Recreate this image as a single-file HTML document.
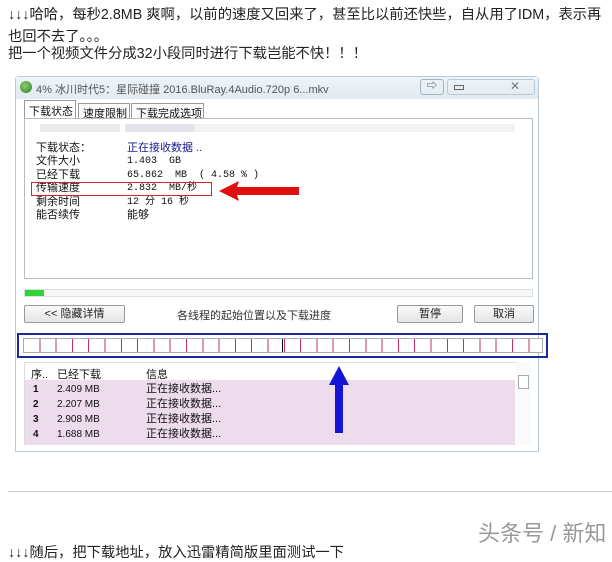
<!DOCTYPE html>
<html><head><meta charset="utf-8"><style>
*{margin:0;padding:0;box-sizing:border-box}
body{width:612px;height:552px;overflow:hidden;background:#fff;font-family:"Liberation Sans","Noto Sans CJK SC",sans-serif;color:#222;position:relative}
.a{position:absolute;white-space:nowrap}
.t{font-size:14.3px;left:8px;line-height:18px}
.s{font-family:"Liberation Sans","Noto Sans CJK SC",sans-serif;font-size:11px;color:#111}
.btn{position:absolute;border:1px solid #9a9a9a;background:linear-gradient(#fafafa,#e4e4e4);font-size:11px;text-align:center;line-height:16px;border-radius:2px}
</style></head><body>
<div class="a t" style="top:6px">↓↓↓哈哈，每秒2.8MB 爽啊，以前的速度又回来了，甚至比以前还快些，自从用了IDM，表示再</div>
<div class="a t" style="top:28px">也回不去了。。。</div>
<div class="a t" style="top:45px">把一个视频文件分成32小段同时进行下载岂能不快！！！</div>

<div class="a" style="left:15px;top:76px;width:524px;height:376px;border:1px solid #b9c9d3;background:#fff;border-radius:4px 4px 0 0"></div>
<div class="a" style="left:16px;top:77px;width:522px;height:22px;background:linear-gradient(#eef4f8,#e2eaf0)"></div>
<div class="a" style="left:20px;top:81px;width:12px;height:12px;border-radius:50%;background:radial-gradient(circle at 40% 40%,#8fd16a,#2a7a2a)"></div>
<div class="a" style="left:36px;top:81px;font-size:11px;color:#555">4% 冰川时代5：星际碰撞 2016.BluRay.4Audio.720p 6...mkv</div>
<div class="a" style="left:420px;top:79px;width:24px;height:16px;border:1px solid #9fb6c2;border-radius:3px;font-size:10px;text-align:center;line-height:14px;color:#333">⇨</div>
<div class="a" style="left:447px;top:79px;width:88px;height:16px;border:1px solid #b9c9d3;border-radius:3px"></div>
<div class="a" style="left:454px;top:85px;width:10px;height:5px;border:1px solid #666"></div>
<div class="a" style="left:510px;top:79px;font-size:12px;color:#777">✕</div>

<div class="a s" style="left:24px;top:100px;width:52px;height:19px;border:1px solid #999;border-bottom:none;background:#fff;padding:2px 4px">下载状态</div>
<div class="a s" style="left:78px;top:103px;width:52px;height:16px;border:1px solid #999;padding:1px 4px;background:#fafafa">速度限制</div>
<div class="a s" style="left:131px;top:103px;width:73px;height:16px;border:1px solid #999;padding:1px 4px;background:#fafafa">下载完成选项</div>
<div class="a" style="left:24px;top:118px;width:509px;height:161px;border:1px solid #bbb"></div>
<div class="a" style="left:40px;top:124px;width:80px;height:8px;background:#ebebeb"></div>
<div class="a" style="left:125px;top:124px;width:70px;height:8px;background:#e4e4ee"></div>
<div class="a" style="left:195px;top:124px;width:320px;height:8px;background:#f2f2f2"></div>

<div class="a s" style="left:36px;top:139px">下载状态：</div>
<div class="a s" style="left:127px;top:139px;color:#1a1a8a">正在接收数据 ..</div>
<div class="a s" style="left:36px;top:155px;line-height:13.5px">文件大小<br>已经下载<br>传输速度<br>剩余时间<br>能否续传</div>
<div class="a s" style="left:127px;top:155px;line-height:13.5px;font-family:'Liberation Mono','Noto Sans CJK SC',monospace;font-size:10px">1.403 &nbsp;GB<br>65.862 &nbsp;MB &nbsp;( 4.58 % )<br>2.832 &nbsp;MB/秒<br>12 分 16 秒<br><span style="font-family:'Liberation Sans','Noto Sans CJK SC',sans-serif;font-size:11px">能够</span></div>
<div class="a" style="left:31px;top:182px;width:181px;height:14px;border:1.5px solid #d22"></div>
<svg class="a" style="left:217px;top:180px" width="84" height="22"><path d="M2 11 L22 1 L20 7 L82 7 L82 15 L20 15 L22 21 Z" fill="#e01010"/></svg>

<div class="a" style="left:24px;top:289px;width:509px;height:8px;border:1px solid #ddd;background:#f7f7f7"></div>
<div class="a" style="left:25px;top:290px;width:19px;height:6px;background:#2fd33a"></div>

<div class="btn" style="left:24px;top:305px;width:101px;height:18px">&lt;&lt; 隐藏详情</div>
<div class="a s" style="left:177px;top:307px;color:#333">各线程的起始位置以及下载进度</div>
<div class="btn" style="left:397px;top:305px;width:66px;height:18px">暂停</div>
<div class="btn" style="left:474px;top:305px;width:60px;height:18px">取消</div>

<div class="a" style="left:17px;top:333px;width:531px;height:25px;border:2px solid #1a2a9a"></div>
<div class="a" style="left:23px;top:338px;width:520px;height:15px;border:1px solid #aaa;background:repeating-linear-gradient(90deg,#fff 0 15.3px,#c03060 15.3px 16.3px)"></div>
<div class="a" style="left:282px;top:339px;width:1px;height:13px;background:#000"></div>

<div class="a" style="left:24px;top:362px;width:507px;height:83px;border:1px solid #ddd"></div>
<div class="a" style="left:25px;top:380px;width:490px;height:65px;background:#ecdcec"></div>
<div class="a s" style="left:31px;top:366px">序..</div>
<div class="a s" style="left:57px;top:366px">已经下载</div>
<div class="a s" style="left:146px;top:366px">信息</div>
<div class="a s" style="left:33px;top:382px;line-height:15px;font-weight:bold;font-size:10px">1<br>2<br>3<br>4</div>
<div class="a s" style="left:57px;top:382px;line-height:15px;font-size:10px">2.409 MB<br>2.207 MB<br>2.908 MB<br>1.688 MB</div>
<div class="a s" style="left:146px;top:382px;line-height:15px">正在接收数据...<br>正在接收数据...<br>正在接收数据...<br>正在接收数据...</div>
<div class="a" style="left:516px;top:362px;width:15px;height:83px;background:#fafafa"></div>
<div class="a" style="left:518px;top:375px;width:11px;height:14px;border:1px solid #aaa;background:#fff"></div>
<svg class="a" style="left:328px;top:365px" width="22" height="70"><path d="M11 1 L21 20 L15 20 L15 68 L7 68 L7 20 L1 20 Z" fill="#1515d8"/></svg>

<div class="a" style="left:8px;top:491px;width:604px;height:1px;background:#c8c8c8"></div>
<div class="a" style="left:478px;top:516px;font-size:22px;color:#999">头条号 / 新知</div>
<div class="a t" style="top:544px">↓↓↓随后，把下载地址，放入迅雷精简版里面测试一下</div>
</body></html>
